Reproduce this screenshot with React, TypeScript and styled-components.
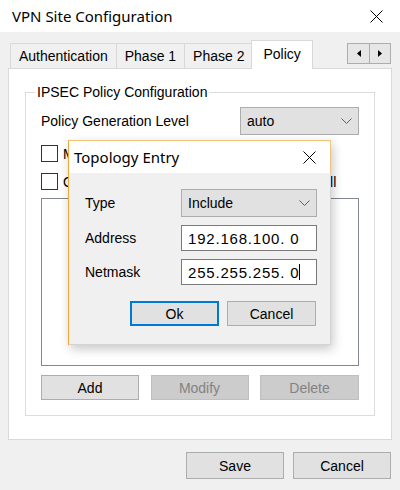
import React from "react";
import styled, { createGlobalStyle } from "styled-components";

const Global = createGlobalStyle`
  html, body { margin: 0; padding: 0; background: #f0f0f0; }
  body {
    font-family: "Liberation Sans", Arial, sans-serif;
    font-size: 14px;
    color: #000;
  }
  * { box-sizing: border-box; }
`;

const Window = styled.div`
  position: relative;
  width: 400px;
  height: 490px;
  background: #f0f0f0;
  overflow: hidden;
`;

const TitleBar = styled.div`
  height: 32px;
  background: #fff;
  display: flex;
  align-items: center;
  justify-content: space-between;
  padding: 0 17px 0 12px;
  font-family: "Noto Sans", "Open Sans", sans-serif;
  font-size: 15px;
  color: #000;
`;

const Body = styled.div`
  padding: 8px 8px 0 8px;
`;

const TabStrip = styled.div`
  display: flex;
  align-items: flex-end;
  height: 28px;
  padding-left: 2px;
`;

const Tab = styled.div<{ $active?: boolean }>`
  position: relative;
  display: flex;
  align-items: center;
  height: ${(p) => (p.$active ? "29px" : "25px")};
  padding: 0 ${(p) => (p.$active ? "11px" : "8px")};
  padding-bottom: ${(p) => (p.$active ? "2px" : "0")};
  margin: 0 ${(p) => (p.$active ? "-2px" : "0")} ${(p) => (p.$active ? "-1px" : "0")}
    ${(p) => (p.$active ? "-2px" : "-1px")};
  background: ${(p) => (p.$active ? "#fff" : "#f0f0f0")};
  border: 1px solid #d9d9d9;
  border-bottom: none;
  z-index: ${(p) => (p.$active ? 1 : 0)};
  white-space: nowrap;
  &:first-child { margin-left: 0; }
`;

const TabScroller = styled.div`
  display: flex;
  margin-left: auto;
  margin-right: 1px;
  margin-bottom: 4px;
  border: 1px solid #adadad;
  background: #e6e6e6;
`;

const ScrollBtn = styled.div`
  width: 21px;
  height: 19px;
  display: flex;
  align-items: center;
  justify-content: center;
  & + & { border-left: 1px solid #adadad; }
`;

const Panel = styled.div`
  height: 372px;
  background: #fff;
  border: 1px solid #d9d9d9;
  padding: 23px 16px 0 16px;
`;

const GroupBox = styled.div`
  position: relative;
  border: 1px solid #dcdcdc;
  padding: 14px 15px 15px 15px;
  display: flex;
  flex-direction: column;
`;

const Legend = styled.span`
  position: absolute;
  top: -9px;
  left: 9px;
  padding: 0 2px;
  line-height: 16px;
  background: #fff;
`;

const FieldRow = styled.div`
  display: flex;
  align-items: center;
  justify-content: space-between;
  height: 28px;
`;

const Combo = styled.div<{ $width: number; $height: number }>`
  width: ${(p) => p.$width}px;
  height: ${(p) => p.$height}px;
  background: #e1e1e1;
  border: 1px solid #adadad;
  display: flex;
  align-items: center;
  justify-content: space-between;
  padding: 0 6px 0 6px;
`;

const CheckRow = styled.div<{ $top: number }>`
  display: flex;
  align-items: center;
  gap: 5px;
  height: 17px;
  margin-top: ${(p) => p.$top}px;
  white-space: nowrap;
  letter-spacing: 0.12px;
`;

const CheckBox = styled.span`
  flex: none;
  width: 17px;
  height: 17px;
  border: 1px solid #333;
  background: #fff;
`;

const ListBox = styled.div`
  height: 168px;
  margin-top: 8px;
  border: 1px solid #828790;
  background: #fff;
`;

const ButtonRow = styled.div`
  display: flex;
  justify-content: space-between;
  margin-top: 9px;
`;

const Button = styled.button<{ $w: number; $h: number; $isDefault?: boolean }>`
  width: ${(p) => p.$w}px;
  height: ${(p) => p.$h}px;
  padding: 0;
  font-family: "Liberation Sans", Arial, sans-serif;
  font-size: 14px;
  color: #000;
  background: #e1e1e1;
  border: ${(p) => (p.$isDefault ? "2px solid #0078d7" : "1px solid #adadad")};
  &:disabled {
    background: #cccccc;
    border-color: #bfbfbf;
    color: #838383;
  }
`;

const Footer = styled.div`
  display: flex;
  justify-content: flex-end;
  gap: 9px;
  margin-top: 12px;
  padding-right: 1px;
`;

const Dialog = styled.div`
  position: absolute;
  left: 68px;
  top: 140px;
  width: 263px;
  height: 205px;
  display: flex;
  flex-direction: column;
  border-left: 1px solid #f0a73a;
  border-top: 1px solid #f3c27c;
  box-shadow: 2px 4px 10px rgba(0, 0, 0, 0.22);
  z-index: 10;
`;

const DialogTitle = styled.div`
  height: 32px;
  flex: none;
  background: #fff;
  border-right: 1px solid #f3c27c;
  display: flex;
  align-items: center;
  justify-content: space-between;
  padding: 0 14px 0 5px;
  font-family: "Noto Sans", "Open Sans", sans-serif;
  font-size: 15px;
`;

const DialogBody = styled.div`
  flex: 1;
  background: #f0f0f0;
  border-right: 1px solid #d4d4d4;
  border-bottom: 1px solid #d4d4d4;
  padding: 16px 13px 0 16px;
`;

const FormGrid = styled.div`
  display: grid;
  grid-template-columns: 96px 136px;
  row-gap: 8px;
  align-items: center;
`;

const IpInput = styled.div`
  height: 26px;
  background: #fff;
  border: 1px solid #7a7a7a;
  display: flex;
  align-items: center;
  padding-left: 6px;
  font-size: 15px;
  letter-spacing: 0.8px;
  white-space: pre;
`;

const Caret = styled.span`
  display: inline-block;
  width: 1px;
  height: 16px;
  background: #000;
`;

const DialogButtons = styled.div`
  display: flex;
  justify-content: flex-end;
  gap: 8px;
  margin-top: 16px;
  margin-right: 1px;
`;

const CloseIcon = () => (
  <svg width="13" height="13" viewBox="0 0 13 13">
    <path d="M0.5 0.5 L12.5 12.5 M12.5 0.5 L0.5 12.5" stroke="#000" strokeWidth="1" fill="none" />
  </svg>
);

const Chevron = () => (
  <svg width="11" height="6" viewBox="0 0 11 6">
    <polyline points="0.5,0.5 5.5,5.5 10.5,0.5" stroke="#606060" strokeWidth="1" fill="none" />
  </svg>
);

const LeftTri = () => (
  <svg width="4" height="7" viewBox="0 0 4 7">
    <polygon points="4,0 0,3.5 4,7" fill="#000" />
  </svg>
);

const RightTri = () => (
  <svg width="4" height="7" viewBox="0 0 4 7">
    <polygon points="0,0 4,3.5 0,7" fill="#000" />
  </svg>
);

export default function App() {
  return (
    <Window>
      <Global />
      <TitleBar>
        <span>VPN Site Configuration</span>
        <CloseIcon />
      </TitleBar>
      <Body>
        <TabStrip>
          <Tab>Authentication</Tab>
          <Tab>Phase 1</Tab>
          <Tab>Phase 2</Tab>
          <Tab $active>Policy</Tab>
          <TabScroller>
            <ScrollBtn>
              <LeftTri />
            </ScrollBtn>
            <ScrollBtn>
              <RightTri />
            </ScrollBtn>
          </TabScroller>
        </TabStrip>
        <Panel>
          <GroupBox>
            <Legend>IPSEC Policy Configuration</Legend>
            <FieldRow>
              <span>Policy Generation Level</span>
              <Combo $width={119} $height={28}>
                <span>auto</span>
                <Chevron />
              </Combo>
            </FieldRow>
            <CheckRow $top={10}>
              <CheckBox />
              <span>Maintain Persistent Security Associations</span>
            </CheckRow>
            <CheckRow $top={11}>
              <CheckBox />
              <span>Obtain Topology Automatically or Tunnel All</span>
            </CheckRow>
            <ListBox />
            <ButtonRow>
              <Button $w={98} $h={25}>Add</Button>
              <Button $w={98} $h={25} disabled>
                Modify
              </Button>
              <Button $w={99} $h={25} disabled>
                Delete
              </Button>
            </ButtonRow>
          </GroupBox>
        </Panel>
        <Footer>
          <Button $w={98} $h={27}>Save</Button>
          <Button $w={98} $h={27}>Cancel</Button>
        </Footer>
      </Body>

      <Dialog>
        <DialogTitle>
          <span>Topology Entry</span>
          <CloseIcon />
        </DialogTitle>
        <DialogBody>
          <FormGrid>
            <span>Type</span>
            <Combo $width={136} $height={28}>
              <span>Include</span>
              <Chevron />
            </Combo>
            <span>Address</span>
            <IpInput>192.168.100. 0</IpInput>
            <span>Netmask</span>
            <IpInput>
              255.255.255. 0<Caret />
            </IpInput>
          </FormGrid>
          <DialogButtons>
            <Button $w={89} $h={25} $isDefault>
              Ok
            </Button>
            <Button $w={89} $h={25}>Cancel</Button>
          </DialogButtons>
        </DialogBody>
      </Dialog>
    </Window>
  );
}
